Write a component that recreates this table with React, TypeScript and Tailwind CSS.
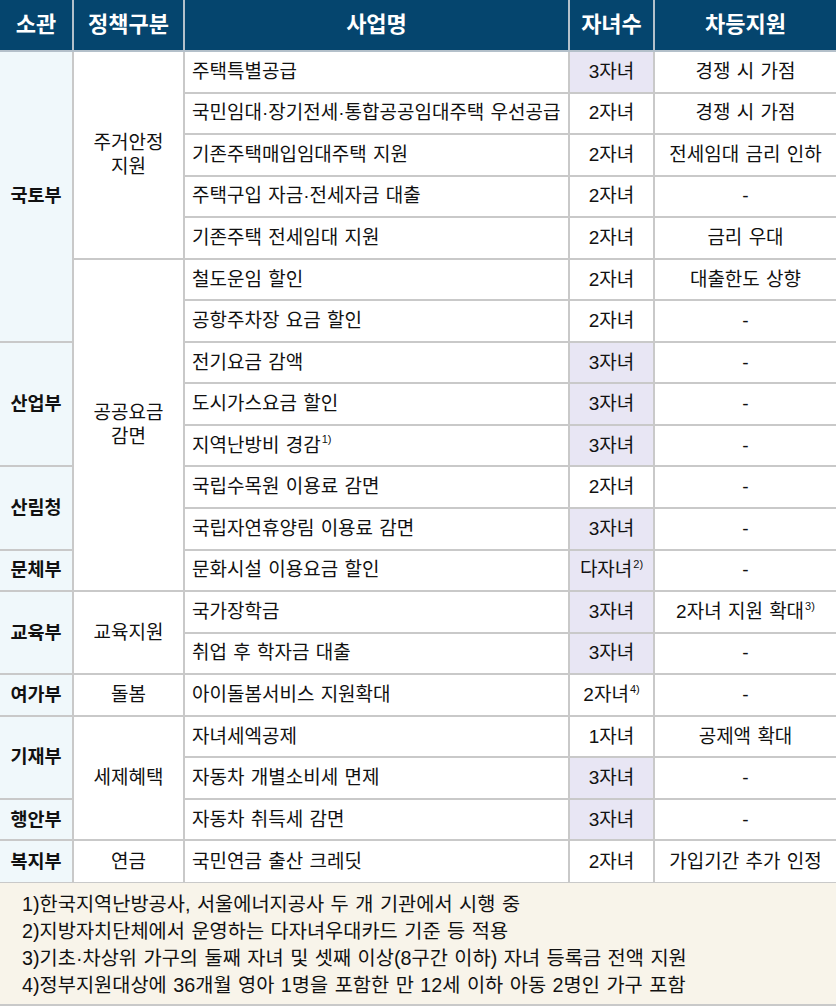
import React from 'react';

// 저출산 대응 다자녀 지원 사업 표

type Row = {
  org?: { name: string; span: number };
  policy?: { name: string[]; span: number };
  title: string;
  titleNote?: string;
  kids: string;
  kidsNote?: string;
  hl?: boolean;
  diff: string;
  diffNote?: string;
};

const ROWS: Row[] = [
  { org: { name: '국토부', span: 7 }, policy: { name: ['주거안정', '지원'], span: 5 }, title: '주택특별공급', kids: '3자녀', hl: true, diff: '경쟁 시 가점' },
  { title: '국민임대·장기전세·통합공공임대주택 우선공급', kids: '2자녀', diff: '경쟁 시 가점' },
  { title: '기존주택매입임대주택 지원', kids: '2자녀', diff: '전세임대 금리 인하' },
  { title: '주택구입 자금·전세자금 대출', kids: '2자녀', diff: '-' },
  { title: '기존주택 전세임대 지원', kids: '2자녀', diff: '금리 우대' },
  { policy: { name: ['공공요금', '감면'], span: 8 }, title: '철도운임 할인', kids: '2자녀', diff: '대출한도 상향' },
  { title: '공항주차장 요금 할인', kids: '2자녀', diff: '-' },
  { org: { name: '산업부', span: 3 }, title: '전기요금 감액', kids: '3자녀', hl: true, diff: '-' },
  { title: '도시가스요금 할인', kids: '3자녀', hl: true, diff: '-' },
  { title: '지역난방비 경감', titleNote: '1)', kids: '3자녀', hl: true, diff: '-' },
  { org: { name: '산림청', span: 2 }, title: '국립수목원 이용료 감면', kids: '2자녀', diff: '-' },
  { title: '국립자연휴양림 이용료 감면', kids: '3자녀', hl: true, diff: '-' },
  { org: { name: '문체부', span: 1 }, title: '문화시설 이용요금 할인', kids: '다자녀', kidsNote: '2)', hl: true, diff: '-' },
  { org: { name: '교육부', span: 2 }, policy: { name: ['교육지원'], span: 2 }, title: '국가장학금', kids: '3자녀', hl: true, diff: '2자녀 지원 확대', diffNote: '3)' },
  { title: '취업 후 학자금 대출', kids: '3자녀', hl: true, diff: '-' },
  { org: { name: '여가부', span: 1 }, policy: { name: ['돌봄'], span: 1 }, title: '아이돌봄서비스 지원확대', kids: '2자녀', kidsNote: '4)', diff: '-' },
  { org: { name: '기재부', span: 2 }, policy: { name: ['세제혜택'], span: 3 }, title: '자녀세엑공제', kids: '1자녀', diff: '공제액 확대' },
  { title: '자동차 개별소비세 면제', kids: '3자녀', hl: true, diff: '-' },
  { org: { name: '행안부', span: 1 }, title: '자동차 취득세 감면', kids: '3자녀', hl: true, diff: '-' },
  { org: { name: '복지부', span: 1 }, policy: { name: ['연금'], span: 1 }, title: '국민연금 출산 크레딧', kids: '2자녀', diff: '가입기간 추가 인정' },
];

const NOTES = [
  '1)한국지역난방공사, 서울에너지공사 두 개 기관에서 시행 중',
  '2)지방자치단체에서 운영하는 다자녀우대카드 기준 등 적용',
  '3)기초·차상위 가구의 둘째 자녀 및 셋째 이상(8구간 이하) 자녀 등록금 전액 지원',
  '4)정부지원대상에 36개월 영아 1명을 포함한 만 12세 이하 아동 2명인 가구 포함',
];

const Note = ({ n }: { n?: string }) =>
  n ? <sup className="text-[11px] top-[-0.75em] ml-[1px]">{n}</sup> : null;

const cell = 'border-2 border-[#c9c9c9] h-[41.55px] p-0';

export default function App() {
  return (
    <div className="w-[836px] bg-white text-[#111] font-['Liberation_Sans','Noto_Sans_CJK_KR',sans-serif]">
      <table className="w-full table-fixed border-collapse border-hidden text-[19px] leading-[24px] [word-spacing:1px]">
        <colgroup>
          <col className="w-[73px]" />
          <col className="w-[111px]" />
          <col className="w-[385px]" />
          <col className="w-[85px]" />
          <col className="w-[182px]" />
        </colgroup>
        <thead>
          <tr className="h-[51px] bg-[#05456e] text-white text-[22px] font-bold">
            {['소관', '정책구분', '사업명', '자녀수', '차등지원'].map(h => (
              <th key={h} className="border-2 border-[#b4c0ca] font-bold">{h}</th>
            ))}
          </tr>
        </thead>
        <tbody>
          {ROWS.map((r, i) => (
            <tr key={i}>
              {r.org && (
                <td rowSpan={r.org.span} className={`${cell} bg-[#f0f8fb] text-center font-bold text-[18.5px]`}>
                  {r.org.name}
                </td>
              )}
              {r.policy && (
                <td rowSpan={r.policy.span} className={`${cell} text-center`}>
                  {r.policy.name.map(l => <div key={l}>{l}</div>)}
                </td>
              )}
              <td className={`${cell} pl-[7px]`}>
                {r.title}<Note n={r.titleNote} />
              </td>
              <td className={`${cell} text-center ${r.hl ? 'bg-[#e8e6f4]' : ''}`}>
                {r.kids}<Note n={r.kidsNote} />
              </td>
              <td className={`${cell} text-center`}>
                {r.diff}<Note n={r.diffNote} />
              </td>
            </tr>
          ))}
        </tbody>
      </table>
      <div className="border-t border-b-2 border-[#c9c9c9] bg-[#f8f4ea] pl-[22px] pt-[8px] pb-[5px] text-[19.75px] leading-[27px] [word-spacing:1px]">
        {NOTES.map(n => <div key={n}>{n}</div>)}
      </div>
    </div>
  );
}
